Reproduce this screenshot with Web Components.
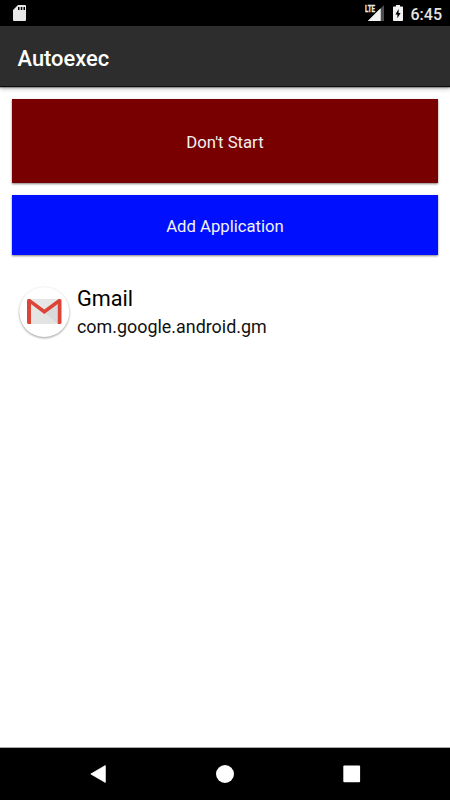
<!DOCTYPE html>
<html lang="en">
<head>
<meta charset="utf-8">
<title>Autoexec</title>
<style>
  html, body { height: 100%; margin: 0; }
  body {
    background: #fff;
    font-family: Roboto, sans-serif;
    overflow: hidden;
  }
</style>
</head>
<body>
<ax-screen>
  <ax-status-bar slot="status">6:45</ax-status-bar>
  <ax-title-bar slot="title">Autoexec</ax-title-bar>
  <ax-button style="--ax-button-bg: #780000; --ax-button-height: 84px">Don't Start</ax-button>
  <ax-button style="--ax-button-bg: #0010ff; --ax-button-height: 60px">Add Application</ax-button>
  <ax-app-item>
    <ax-gmail-icon slot="icon"></ax-gmail-icon>
    <span slot="name">Gmail</span>
    <span slot="package">com.google.android.gm</span>
  </ax-app-item>
  <ax-nav-bar slot="nav"></ax-nav-bar>
</ax-screen>

<script>
class AxElement extends HTMLElement {
  constructor() {
    super();
    const template = document.createElement('template');
    template.innerHTML = this.constructor.markup;
    this.attachShadow({ mode: 'open' });
    this.shadowRoot.appendChild(template.content.cloneNode(true));
  }
}

class AxScreen extends AxElement {
  static markup = `
<style>
  :host {
    display: flex;
    flex-direction: column;
    height: 100vh;
  }
  main {
    flex: 1;
    display: flex;
    flex-direction: column;
    gap: 12px;
    padding: 12px 12px 0;
  }
</style>
<slot name="status"></slot>
<slot name="title"></slot>
<main><slot></slot></main>
<slot name="nav"></slot>
`;
}

class AxStatusBar extends AxElement {
  static markup = `
<style>
  :host {
    display: flex;
    align-items: center;
    box-sizing: border-box;
    height: 26px;
    padding: 0 8px 0 13px;
    background: #000;
    color: #e4e4e4;
    font-size: 16px;
    font-weight: 500;
    line-height: 26px;
  }
  svg { display: block; }
  .sd { margin-right: auto; }
  .signal { margin-right: 8px; }
  .battery { margin-right: 8px; }
  .time { padding-top: 3px; }
</style>
<svg class="sd" width="13" height="16" viewBox="0 0 13 16">
  <path d="M5 0H12Q13 0 13 1V15Q13 16 12 16H1Q0 16 0 15V5z" fill="#e8e8e8"/>
  <path d="M5 2h1.500v3H5zM7.800 2h1.500v3H7.800zM10.500 2H12v3h-1.500z" fill="#000"/>
</svg>
<svg class="signal" width="20" height="26" viewBox="0 0 20 26">
  <path d="M19 5V21H3z" fill="#4d4d4d"/>
  <path d="M15.500 8.500V21H3z" fill="#f2f2f2"/>
  <path d="M0 4H11V13H0z" fill="#000"/>
  <path d="M11 13L15.500 8.500V21H3z" fill="#f2f2f2"/>
  <text x="0" y="12" textLength="10" lengthAdjust="spacingAndGlyphs" font-size="9.500" font-weight="700" fill="#ececec" stroke="#ececec" stroke-width=".35">LTE</text>
</svg>
<svg class="battery" width="10" height="16" viewBox="0 0 10 16">
  <path d="M3 0H7V1.500H9.300Q10 1.500 10 2.300V15.200Q10 16 9.200 16H.8Q0 16 0 15.200V2.300Q0 1.500.7 1.500H3z" fill="#f2f2f2"/>
  <path d="M5.600 3.900V7.900H7.600L4.400 13.300V9.600H2.400z" fill="#000"/>
</svg>
<span class="time"><slot></slot></span>
`;
}

class AxTitleBar extends AxElement {
  static markup = `
<style>
  :host {
    display: flex;
    align-items: center;
    box-sizing: border-box;
    height: 61px;
    padding: 4.500px 17.500px 0;
    background: #2d2d2d;
    border-bottom: 1px solid #0c0c0c;
    box-shadow: 0 1px 1px rgba(0, 0, 0, .3), 0 2px 4px rgba(0, 0, 0, .25);
    color: #fff;
    font-size: 21.900px;
    font-weight: 500;
  }
</style>
<slot></slot>
`;
}

class AxButton extends AxElement {
  static markup = `
<style>
  :host {
    display: flex;
    align-items: center;
    justify-content: center;
    box-sizing: border-box;
    height: var(--ax-button-height);
    padding-top: 2px;
    background: var(--ax-button-bg);
    box-shadow: 0 1px 2px rgba(0, 0, 0, .5);
    color: #f2f2f2;
    font-size: 16.700px;
  }
</style>
<slot></slot>
`;
}

class AxAppItem extends AxElement {
  static markup = `
<style>
  :host {
    display: flex;
    align-items: center;
    gap: 7px;
    padding: 18px 7px 0;
    color: #000;
  }
  .text {
    display: flex;
    flex-direction: column;
  }
  .name {
    font-size: 21.700px;
    line-height: 28px;
  }
  .package {
    font-size: 17.900px;
    line-height: 28px;
    color: #111;
  }
</style>
<slot name="icon"></slot>
<div class="text">
  <div class="name"><slot name="name"></slot></div>
  <div class="package"><slot name="package"></slot></div>
</div>
`;
}

class AxGmailIcon extends AxElement {
  static markup = `
<style>
  :host { display: block; }
  svg { display: block; overflow: visible; }
  circle { filter: drop-shadow(0 1px .8px rgba(0, 0, 0, .4)); }
</style>
<svg width="51" height="54" viewBox="0 0 51 54">
  <circle cx="25.300" cy="26" r="25" fill="#fff"/>
  <g transform="translate(0 -1)">
    <path d="M10 14H40V39H10z" fill="#e5e5e5"/>
    <path d="M12 18L25.300 29.500L39 18V39z" fill="#d9d9d9"/>
    <path d="M12 39L25.300 28L39 39z" fill="#e3e3e3"/>
    <path d="M11 14H40L25.300 25z" fill="#e6e6e6"/>
    <path d="M8 15.500Q8 14 9.500 14H11L25.300 24.500L39.600 14H41Q42.500 14 42.500 15.500V37.500Q42.500 39 41 39H38.800V19L25.300 29L12 19V39H9.500Q8 39 8 37.500z" fill="#db4437"/>
  </g>
</svg>
`;
}

class AxNavBar extends AxElement {
  static markup = `
<style>
  :host {
    display: flex;
    align-items: center;
    justify-content: center;
    gap: 108.500px;
    box-sizing: border-box;
    height: 53px;
    background: #000;
    border-top: 1px solid #a8a8a8;
  }
  svg { display: block; }
</style>
<svg width="18" height="18" viewBox="0 0 18 18"><path d="M15.300.6V17.400L.8 9z" fill="#fff" stroke="#fff" stroke-width=".8" stroke-linejoin="round"/></svg>
<svg width="18" height="18" viewBox="0 0 18 18"><circle cx="9" cy="9" r="9" fill="#fff"/></svg>
<svg width="18" height="18" viewBox="0 0 18 18"><rect x=".3" y=".4" width="16.800" height="16.800" rx="1" fill="#fff"/></svg>
`;
}

customElements.define('ax-screen', AxScreen);
customElements.define('ax-status-bar', AxStatusBar);
customElements.define('ax-title-bar', AxTitleBar);
customElements.define('ax-button', AxButton);
customElements.define('ax-app-item', AxAppItem);
customElements.define('ax-gmail-icon', AxGmailIcon);
customElements.define('ax-nav-bar', AxNavBar);
</script>
</body>
</html>
